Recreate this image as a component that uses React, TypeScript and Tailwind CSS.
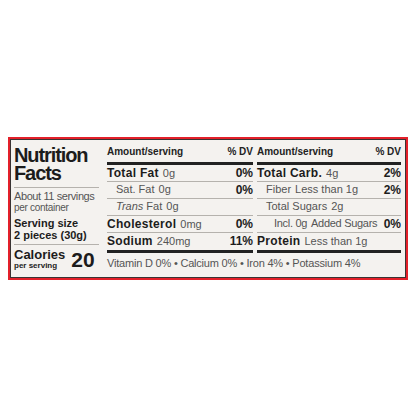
const leftRows = [
  { label: "Total Fat", value: "0g", dv: "0%", bold: true, indent: 0 },
  { label: "Sat. Fat", value: "0g", dv: "0%", bold: false, indent: 9 },
  { label: "Trans Fat", value: "0g", dv: "", bold: false, indent: 9, italic: true },
  { label: "Cholesterol", value: "0mg", dv: "0%", bold: true, indent: 0 },
  { label: "Sodium", value: "240mg", dv: "11%", bold: true, indent: 0 },
];

const rightRows = [
  { label: "Total Carb.", value: "4g", dv: "2%", bold: true, indent: 0 },
  { label: "Fiber", value: "Less than 1g", dv: "2%", bold: false, indent: 9 },
  { label: "Total Sugars", value: "2g", dv: "", bold: false, indent: 9 },
  { label: "Incl. 0g", value: "Added Sugars", dv: "0%", bold: false, indent: 17, tight: true },
  { label: "Protein", value: "Less than 1g", dv: "", bold: true, indent: 0 },
];

type Row = {
  label: string;
  value: string;
  dv: string;
  bold: boolean;
  indent: number;
  italic?: boolean;
  tight?: boolean;
};

function NutrientColumn({ rows }: { rows: Row[] }) {
  return (
    <div className="flex flex-col">
      <div className="flex h-[15px] items-center justify-between text-[10px] font-bold text-[#222]">
        <span>Amount/serving</span>
        <span>% DV</span>
      </div>
      <div className="mt-[3px] h-[3px] bg-[#222]" />
      {rows.map((row, i) => (
        <div
          key={i}
          className={
            i < rows.length - 1
              ? "flex h-[17px] items-center justify-between border-b border-[#b5b2ad]"
              : "flex h-[16px] items-center justify-between"
          }
          style={{ paddingLeft: row.indent }}
        >
          <span className={row.tight ? "text-[11px] tracking-[-0.3px] text-[#555]" : "text-[11px] text-[#555]"}>
            {row.bold ? (
              <span className="text-[12px] font-bold tracking-[0.3px] text-[#1c1c1c]">{row.label}</span>
            ) : row.italic ? (
              <span>
                <i>Trans</i> Fat
              </span>
            ) : (
              <span>{row.label}</span>
            )}
            <span className="ml-[4px]">{row.value}</span>
          </span>
          <span className="text-[12px] font-bold text-[#1c1c1c]">{row.dv}</span>
        </div>
      ))}
      <div className="mt-[1px] h-[3px] bg-[#222]" />
    </div>
  );
}

export default function App() {
  return (
    <div
      className="flex h-screen w-full items-center justify-center bg-white"
      style={{ fontFamily: '"Liberation Sans", Arial, sans-serif' }}
    >
      <div className="w-[400px] border-2 border-[#e3202a]">
        <div className="flex border border-[#3a3434] bg-[#f4f2ef] pb-[3px] pl-[3px] pr-[3px] pt-[4px]">
          <div className="flex w-[85px] flex-col">
            <div className="mt-[2px] text-[20px] font-bold leading-[18px] tracking-[-1.1px] text-[#1c1c1c]">
              Nutrition
            </div>
            <div className="text-[20px] font-bold leading-[18px] tracking-[-1.1px] text-[#1c1c1c]">Facts</div>
            <div className="mt-[5px] border-t border-[#b5b2ad]" />
            <div className="mt-[2px] text-[11px] leading-[12px] tracking-[-0.4px] text-[#555]">
              About 11 servings
            </div>
            <div className="text-[10px] leading-[12px] tracking-[-0.3px] text-[#555]">per container</div>
            <div className="mt-[3px] text-[11px] font-bold leading-[12px] text-[#1c1c1c]">Serving size</div>
            <div className="text-[11px] font-bold leading-[12px] text-[#1c1c1c]">2 pieces (30g)</div>
            <div className="mt-[3px] border-t border-[#b5b2ad]" />
            <div className="mt-[3px] flex items-end gap-[6px]">
              <div className="flex flex-col text-[#1c1c1c]">
                <span className="text-[13px] font-bold leading-[13px]">Calories</span>
                <span className="text-[8px] font-bold leading-[9px]">per serving</span>
              </div>
              <span className="text-[21px] font-bold leading-[20px] text-[#1c1c1c]">20</span>
            </div>
          </div>
          <div className="ml-[8px] flex flex-1 flex-col">
            <div className="flex gap-[4px]">
              <div className="w-[146px]">
                <NutrientColumn rows={leftRows} />
              </div>
              <div className="w-[144px]">
                <NutrientColumn rows={rightRows} />
              </div>
            </div>
            <div className="flex h-[21px] items-center text-[11px] tracking-[-0.2px] text-[#555]">
              Vitamin D 0% • Calcium 0% • Iron 4% • Potassium 4%
            </div>
          </div>
        </div>
      </div>
    </div>
  );
}
